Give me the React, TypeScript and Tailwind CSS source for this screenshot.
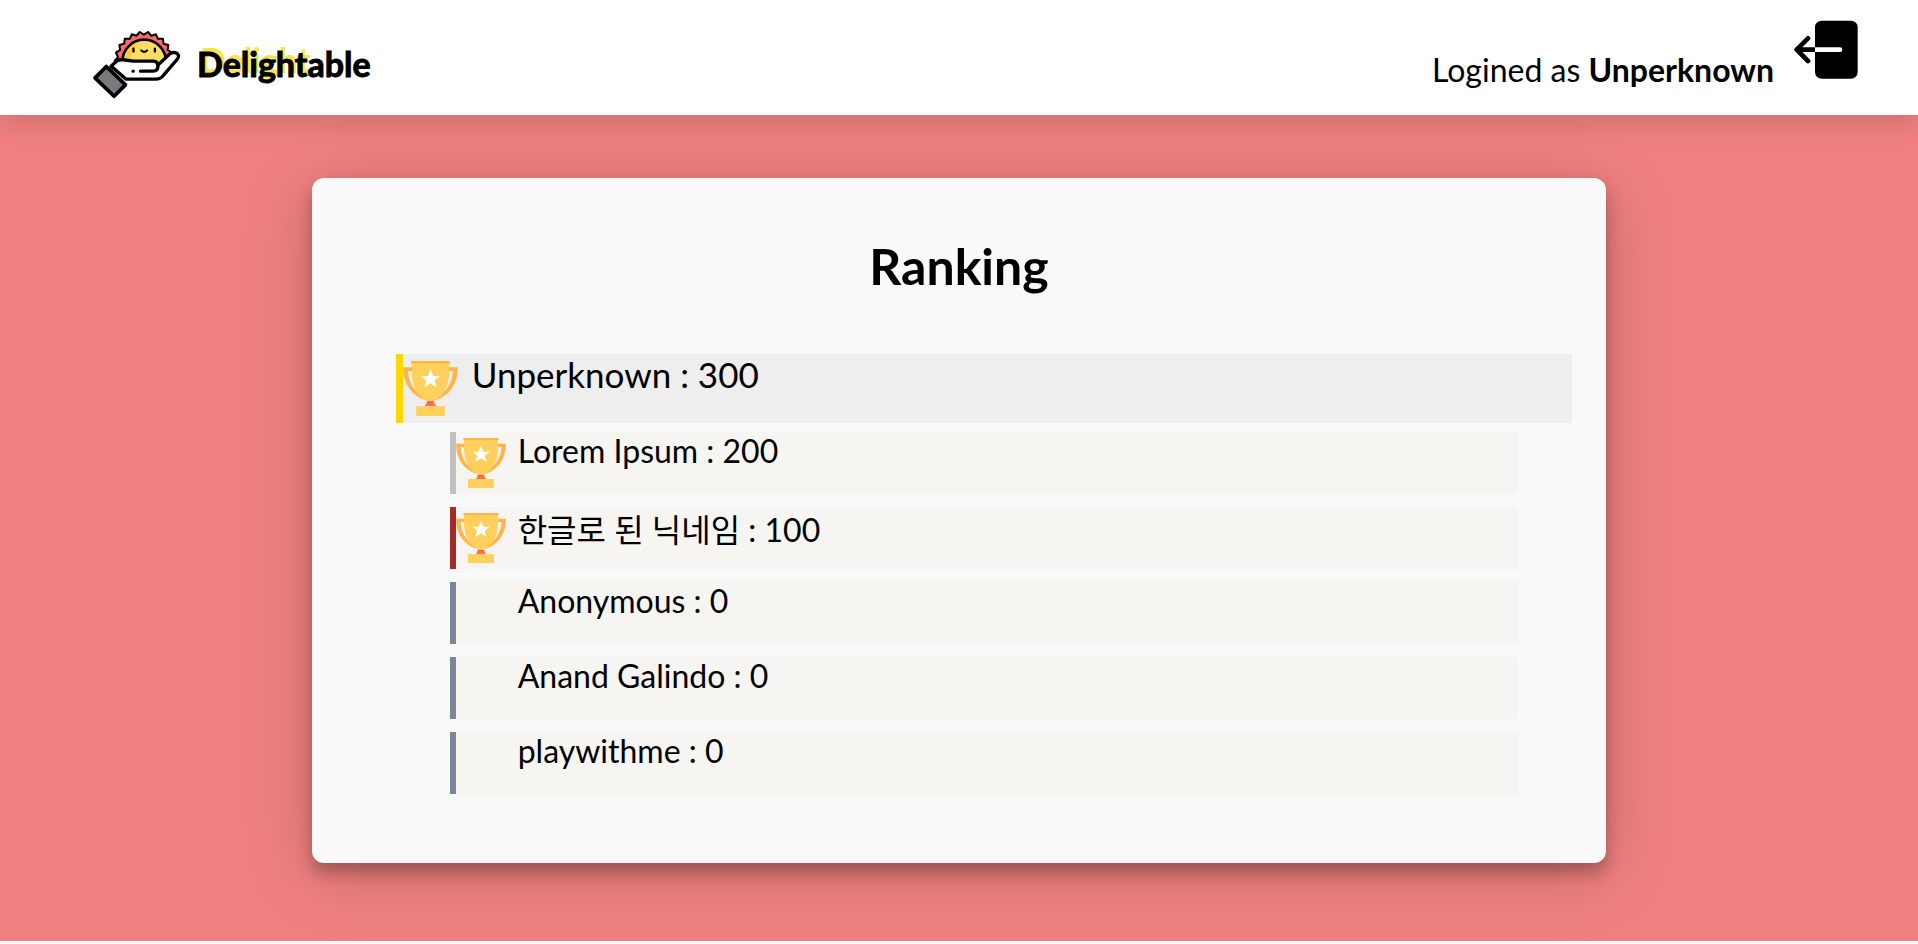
import React from "react";

type Entry = { name: string; score: number; accent: string; trophy: boolean };

const leader = { name: "Unperknown", score: 300 };

const entries: Entry[] = [
  { name: "Lorem Ipsum", score: 200, accent: "border-[#c0c0c0]", trophy: true },
  { name: "한글로 된 닉네임", score: 100, accent: "border-[#a52a2a]", trophy: true },
  { name: "Anonymous", score: 0, accent: "border-[#778899]", trophy: false },
  { name: "Anand Galindo", score: 0, accent: "border-[#778899]", trophy: false },
  { name: "playwithme", score: 0, accent: "border-[#778899]", trophy: false },
];

// Hangul glyphs are taller than Latin ones, so their line needs more room.
const hasHangul = (text: string) => /[\uac00-\ud7a3]/.test(text);

function Trophy({ className }: { className: string }) {
  return (
    <svg viewBox="0 0 150 150" className={className} aria-hidden="true">
      <path
        d="M0 17h27v10H14c1 28 13 52 38 66l9 15C24 93 1 66 0 17ZM150 17h-27v10h13c-1 28-13 52-38 66l-9 15c37-15 60-42 61-91Z"
        fill="#ffb54c"
      />
      <path d="M65 110h20c0 6 3 10 7 14H58c4-4 7-8 7-14Z" fill="#ff7058" />
      <path d="M67 110h16v4H67Z" fill="#f1543f" />
      <path d="M24 4h102v26c0 42-21 72-43 80H67C45 102 24 72 24 30Z" fill="#ffd05b" />
      <path d="M22 0h106v7H22Z" fill="#ffb54c" />
      <path d="M40 123h70q4 0 4 4v23H36v-23q0-4 4-4Z" fill="#ffd05b" />
      <path d="M75 23l7 18h19L86 53l6 19-17-11-17 11 6-19-15-12h19Z" fill="#fff" />
    </svg>
  );
}

// Saw-toothed ring of the sun: outer and inner points alternate round the centre.
const SUN_POINTS = Array.from({ length: 44 }, (_, i) => {
  const angle = (i / 44) * Math.PI * 2;
  const radius = i % 2 === 0 ? 87 : 78;
  return `${(191 + radius * Math.cos(angle)).toFixed(1)},${(122 + radius * Math.sin(angle)).toFixed(1)}`;
}).join(" ");

function HandSun() {
  return (
    <svg viewBox="36 30 266 208" className="w-[89px] shrink-0" aria-hidden="true">
      <defs>
        <clipPath id="sun-top">
          <path d="M90 20h200v90l-40 30H140l-42-16Z" />
        </clipPath>
      </defs>
      <g clipPath="url(#sun-top)">
        <polygon points={SUN_POINTS} fill="#f9696c" stroke="#000" strokeWidth="6" strokeLinejoin="round" />
        <circle cx="192" cy="124" r="65" fill="#fdde62" stroke="#000" strokeWidth="8" />
        <path d="M133 124C134 94 156 70 182 66c-18 12-30 32-32 58Z" fill="#fcc94c" />
      </g>
      <path d="M160 86v8M224 86v8" stroke="#000" strokeWidth="7" strokeLinecap="round" />
      <path d="M183 91q9 9 18 0" fill="none" stroke="#000" strokeWidth="6" strokeLinecap="round" />
      <path
        d="M93 138l18-16q7-4 18-3l30 4h61q12 1 13 12l35-33q9-8 20-3 11 6 4 17l-42 49q-8 12-24 12h-88Z"
        fill="#fff"
        stroke="#000"
        strokeWidth="10"
        strokeLinejoin="round"
      />
      <path d="M181 153h37q14-1 15-12v-10" fill="none" stroke="#000" strokeWidth="10" strokeLinecap="round" />
      <circle cx="159" cy="153" r="5" />
      <path d="M45 173l34-34 57 55-34 34Z" fill="#777b7e" stroke="#000" strokeWidth="11" strokeLinejoin="round" />
    </svg>
  );
}

function LogoutIcon() {
  return (
    <svg viewBox="1120 31 192 177" className="h-[59px] w-16" aria-hidden="true">
      <rect x="1183" y="33" width="128" height="174" rx="20" />
      <path d="M1162 86l-34 34 34 34M1130 120h54" fill="none" stroke="#000" strokeWidth="14" strokeLinecap="round" strokeLinejoin="round" />
      <path d="M1183 113h75q7 0 7 7t-7 7h-75Z" fill="#fff" />
    </svg>
  );
}

export default function App() {
  return (
    <div className="bg-white font-['Lato','Noto_Sans_CJK_KR',sans-serif] text-black">
      <header className="relative flex h-[115px] items-start justify-between bg-white pr-[60px] pl-[92px] shadow-[0_10px_24px_rgba(0,0,0,0.12)]">
        <a href="#home" className="flex items-start gap-4 pt-[30px]">
          <HandSun />
          <span className="pt-3 text-[34px] leading-[44px] font-bold [-webkit-text-stroke:1px_#000]">
            <span className="[text-shadow:3px_-4px_0_#fbe445]">Delight</span>able
          </span>
        </a>
        <div className="flex items-start gap-5 pt-5">
          <p className="pt-[30px] text-[32px] leading-10">
            Logined as <strong className="font-bold">Unperknown</strong>
          </p>
          <button type="button" aria-label="Log out" className="cursor-pointer">
            <LogoutIcon />
          </button>
        </div>
      </header>

      <main className="bg-[#f08080] pt-[63px] pb-[78px]">
        <section className="mx-auto w-[67.5%] rounded-xl bg-[#f9f9f9] pt-14 pr-[34px] pb-[69px] pl-[84px] shadow-[0_10px_16px_rgba(0,0,0,0.26),0_10px_70px_rgba(0,0,0,0.18)]">
          <h1 className="pr-[50px] text-center text-[50px] leading-16 font-bold">Ranking</h1>
          <ol className="mt-14">
            <li className="mb-[9px] flex h-[69px] items-start gap-[14px] border-l-[7px] border-[#ffd700] bg-[#eeeeee]">
              <Trophy className="mt-[7px] size-[55px] shrink-0" />
              <span className="text-[35px] leading-10">
                {leader.name} : {leader.score}
              </span>
            </li>
            {entries.map((e) => (
              <li
                key={e.name}
                className={`mx-[54px] mb-[13px] flex h-[62px] items-start gap-3 border-l-[6px] bg-[#f6f5f1] last:mb-0 ${e.accent}`}
              >
                {e.trophy ? <Trophy className="mt-[6px] size-[50px] shrink-0" /> : <span className="size-[50px] shrink-0" />}
                <span className={`text-[32px] ${hasHangul(e.name) ? "leading-[46px]" : "leading-[38px]"}`}>
                  {e.name} : {e.score}
                </span>
              </li>
            ))}
          </ol>
        </section>
      </main>
    </div>
  );
}
